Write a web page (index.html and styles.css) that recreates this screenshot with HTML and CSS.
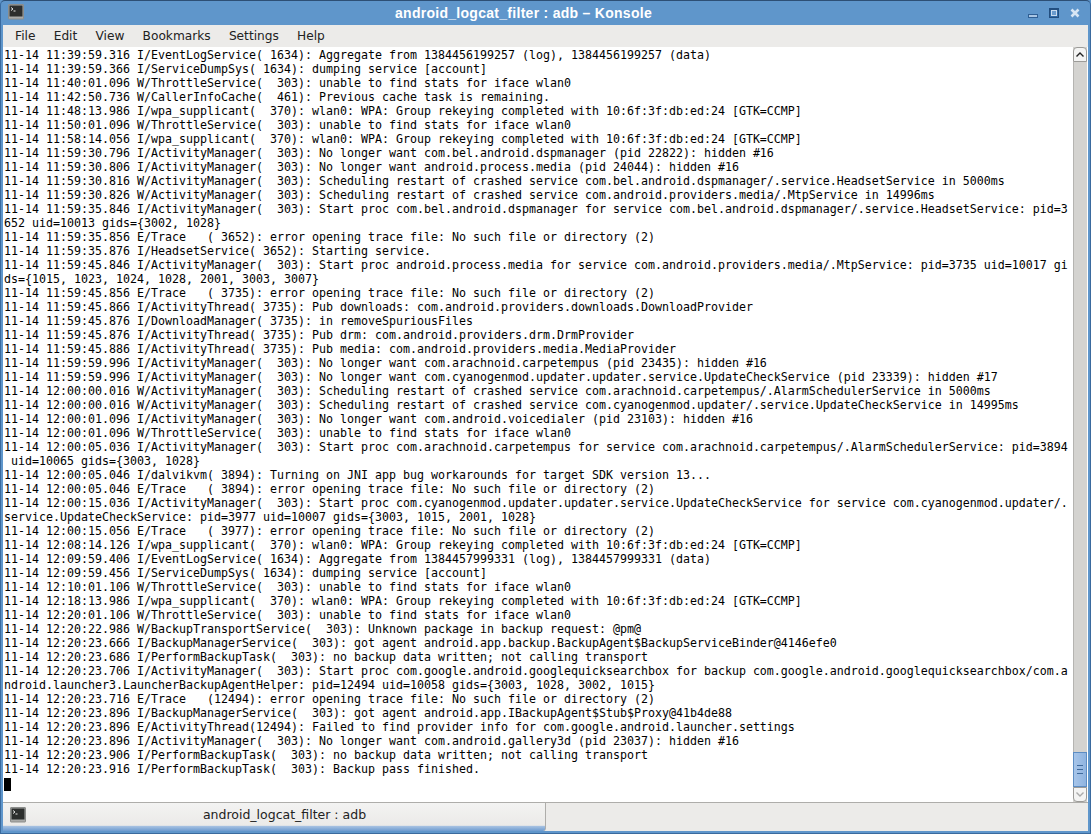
FILE: index.html
```html
<!DOCTYPE html>
<html lang="en">
<head>
<meta charset="utf-8">
<title>android_logcat_filter : adb – Konsole</title>
<link rel="stylesheet" href="styles.css">
</head>
<body>
<div class="window">
  <header class="titlebar">
    <svg class="app-icon" width="16" height="16" viewBox="0 0 16 16"><rect x="0.5" y="0.5" width="15" height="14.5" rx="0.5" fill="#a9aaa8" stroke="#8b8d8b"/><rect x="1.5" y="1.5" width="13" height="11" fill="#2c2e2d"/><path d="M3 3.5l2 1.5-2 1.5" fill="none" stroke="#e8e8e8"/><path d="M5.5 7h2" stroke="#e8e8e8"/></svg>
    <div class="title">android_logcat_filter : adb – Konsole</div>
    <div class="controls">
      <svg width="10" height="5" viewBox="0 0 10 5"><rect x="0.5" y="0.5" width="9" height="3" fill="#a9c6e4" stroke="#2f5f94"/></svg>
      <svg width="10" height="10" viewBox="0 0 10 10"><rect x="0.5" y="0.5" width="9" height="9" fill="#2f6aa8" stroke="#234f80"/><rect x="0.5" y="0.5" width="9" height="2" fill="#234f80"/><rect x="2.5" y="2.5" width="5" height="5" fill="#6a9bcd" stroke="#c9dcf0"/></svg>
      <svg width="10" height="10" viewBox="0 0 10 10"><path d="M1.5 1.5l7 7M8.5 1.5l-7 7" stroke="#d6e5f4" stroke-width="2.6"/></svg>
    </div>
  </header>
  <nav class="menubar">
    <span class="menu">File</span><span class="menu">Edit</span><span class="menu">View</span><span class="menu">Bookmarks</span><span class="menu">Settings</span><span class="menu">Help</span>
  </nav>
  <main class="terminal">
<pre class="log">11-14 11:39:59.316 I/EventLogService( 1634): Aggregate from 1384456199257 (log), 1384456199257 (data)
11-14 11:39:59.366 I/ServiceDumpSys( 1634): dumping service [account]
11-14 11:40:01.096 W/ThrottleService(  303): unable to find stats for iface wlan0
11-14 11:42:50.736 W/CallerInfoCache(  461): Previous cache task is remaining.
11-14 11:48:13.986 I/wpa_supplicant(  370): wlan0: WPA: Group rekeying completed with 10:6f:3f:db:ed:24 [GTK=CCMP]
11-14 11:50:01.096 W/ThrottleService(  303): unable to find stats for iface wlan0
11-14 11:58:14.056 I/wpa_supplicant(  370): wlan0: WPA: Group rekeying completed with 10:6f:3f:db:ed:24 [GTK=CCMP]
11-14 11:59:30.796 I/ActivityManager(  303): No longer want com.bel.android.dspmanager (pid 22822): hidden #16
11-14 11:59:30.806 I/ActivityManager(  303): No longer want android.process.media (pid 24044): hidden #16
11-14 11:59:30.816 W/ActivityManager(  303): Scheduling restart of crashed service com.bel.android.dspmanager/.service.HeadsetService in 5000ms
11-14 11:59:30.826 W/ActivityManager(  303): Scheduling restart of crashed service com.android.providers.media/.MtpService in 14996ms
11-14 11:59:35.846 I/ActivityManager(  303): Start proc com.bel.android.dspmanager for service com.bel.android.dspmanager/.service.HeadsetService: pid=3
652 uid=10013 gids={3002, 1028}
11-14 11:59:35.856 E/Trace   ( 3652): error opening trace file: No such file or directory (2)
11-14 11:59:35.876 I/HeadsetService( 3652): Starting service.
11-14 11:59:45.846 I/ActivityManager(  303): Start proc android.process.media for service com.android.providers.media/.MtpService: pid=3735 uid=10017 gi
ds={1015, 1023, 1024, 1028, 2001, 3003, 3007}
11-14 11:59:45.856 E/Trace   ( 3735): error opening trace file: No such file or directory (2)
11-14 11:59:45.866 I/ActivityThread( 3735): Pub downloads: com.android.providers.downloads.DownloadProvider
11-14 11:59:45.876 I/DownloadManager( 3735): in removeSpuriousFiles
11-14 11:59:45.876 I/ActivityThread( 3735): Pub drm: com.android.providers.drm.DrmProvider
11-14 11:59:45.886 I/ActivityThread( 3735): Pub media: com.android.providers.media.MediaProvider
11-14 11:59:59.996 I/ActivityManager(  303): No longer want com.arachnoid.carpetempus (pid 23435): hidden #16
11-14 11:59:59.996 I/ActivityManager(  303): No longer want com.cyanogenmod.updater.updater.service.UpdateCheckService (pid 23339): hidden #17
11-14 12:00:00.016 W/ActivityManager(  303): Scheduling restart of crashed service com.arachnoid.carpetempus/.AlarmSchedulerService in 5000ms
11-14 12:00:00.016 W/ActivityManager(  303): Scheduling restart of crashed service com.cyanogenmod.updater/.service.UpdateCheckService in 14995ms
11-14 12:00:01.096 I/ActivityManager(  303): No longer want com.android.voicedialer (pid 23103): hidden #16
11-14 12:00:01.096 W/ThrottleService(  303): unable to find stats for iface wlan0
11-14 12:00:05.036 I/ActivityManager(  303): Start proc com.arachnoid.carpetempus for service com.arachnoid.carpetempus/.AlarmSchedulerService: pid=3894
 uid=10065 gids={3003, 1028}
11-14 12:00:05.046 I/dalvikvm( 3894): Turning on JNI app bug workarounds for target SDK version 13...
11-14 12:00:05.046 E/Trace   ( 3894): error opening trace file: No such file or directory (2)
11-14 12:00:15.036 I/ActivityManager(  303): Start proc com.cyanogenmod.updater.updater.service.UpdateCheckService for service com.cyanogenmod.updater/.
service.UpdateCheckService: pid=3977 uid=10007 gids={3003, 1015, 2001, 1028}
11-14 12:00:15.056 E/Trace   ( 3977): error opening trace file: No such file or directory (2)
11-14 12:08:14.126 I/wpa_supplicant(  370): wlan0: WPA: Group rekeying completed with 10:6f:3f:db:ed:24 [GTK=CCMP]
11-14 12:09:59.406 I/EventLogService( 1634): Aggregate from 1384457999331 (log), 1384457999331 (data)
11-14 12:09:59.456 I/ServiceDumpSys( 1634): dumping service [account]
11-14 12:10:01.106 W/ThrottleService(  303): unable to find stats for iface wlan0
11-14 12:18:13.986 I/wpa_supplicant(  370): wlan0: WPA: Group rekeying completed with 10:6f:3f:db:ed:24 [GTK=CCMP]
11-14 12:20:01.106 W/ThrottleService(  303): unable to find stats for iface wlan0
11-14 12:20:22.986 W/BackupTransportService(  303): Unknown package in backup request: @pm@
11-14 12:20:23.666 I/BackupManagerService(  303): got agent android.app.backup.BackupAgent$BackupServiceBinder@4146efe0
11-14 12:20:23.686 I/PerformBackupTask(  303): no backup data written; not calling transport
11-14 12:20:23.706 I/ActivityManager(  303): Start proc com.google.android.googlequicksearchbox for backup com.google.android.googlequicksearchbox/com.a
ndroid.launcher3.LauncherBackupAgentHelper: pid=12494 uid=10058 gids={3003, 1028, 3002, 1015}
11-14 12:20:23.716 E/Trace   (12494): error opening trace file: No such file or directory (2)
11-14 12:20:23.896 I/BackupManagerService(  303): got agent android.app.IBackupAgent$Stub$Proxy@41b4de88
11-14 12:20:23.896 E/ActivityThread(12494): Failed to find provider info for com.google.android.launcher.settings
11-14 12:20:23.896 I/ActivityManager(  303): No longer want com.android.gallery3d (pid 23037): hidden #16
11-14 12:20:23.906 I/PerformBackupTask(  303): no backup data written; not calling transport
11-14 12:20:23.916 I/PerformBackupTask(  303): Backup pass finished.
<span class="cursor"> </span></pre>
    <div class="scrollbar">
      <div class="sb-btn sb-up"><svg width="8" height="5" viewBox="0 0 8 5"><path d="M0.5 4.5L4 1l3.5 3.5" fill="none" stroke="#222" stroke-width="1.4"/></svg></div>
      <div class="sb-track"></div>
      <div class="sb-thumb"><span></span><span></span><span></span></div>
      <div class="sb-btn sb-down"><svg width="8" height="5" viewBox="0 0 8 5"><path d="M0.5 0.5L4 4l3.5-3.5" fill="none" stroke="#aaa" stroke-width="1.4"/></svg></div>
    </div>
  </main>
  <footer class="tabbar">
    <div class="tab">
      <svg class="tab-icon" width="16" height="16" viewBox="0 0 16 16"><rect x="0.5" y="0.5" width="15" height="14.5" rx="0.5" fill="#a9aaa8" stroke="#8b8d8b"/><rect x="1.5" y="1.5" width="13" height="11" fill="#2c2e2d"/><path d="M3 3.5l2 1.5-2 1.5" fill="none" stroke="#e8e8e8"/><path d="M5.5 7h2" stroke="#e8e8e8"/></svg>
      <span class="tab-label">android_logcat_filter : adb</span>
    </div>
  </footer>
</div>
</body>
</html>
```

FILE: styles.css
```css
html, body { margin: 0; padding: 0; }
body { width: 1091px; height: 834px; overflow: hidden; background: #5f96cb; }
.window {
  width: 1091px; height: 834px; box-sizing: border-box;
  display: flex; flex-direction: column;
  background: #5f96cb;
  border-top: 1px solid #2d4f75;
  border-left: 1px solid #3a6a9e;
  border-right: 1px solid #3a6a9e;
  border-bottom: 1px solid #3a6a9e;
  border-radius: 5px 5px 0 0;
}
.titlebar {
  height: 24px; flex: none; display: flex; align-items: center;
  padding: 0 7px; position: relative;
}
.app-icon { margin-top: -2px; }
.title {
  flex: 1; text-align: center; font: bold 14px/24px "Liberation Sans", sans-serif;
  letter-spacing: 0.28px;
  color: #fff; padding-right: 5px;
}
.controls { display: flex; align-items: center; gap: 11px; padding-right: 3px; }
.controls svg:first-child { margin-top: 6px; }
.menubar {
  height: 22px; flex: none; margin: 0 2px; background: #ecebe9;
  display: flex; align-items: center; padding-left: 3px;
  font: 12.2px/22px "DejaVu Sans", sans-serif; color: #222;
}
.menu { padding: 0 9.1px; }
.terminal {
  height: 755px; flex: none; margin: 0 2px; background: #fff;
  display: flex; overflow: hidden;
}
.log {
  flex: 1; margin: 0; padding: 1px 0 0 1px;
  font: 11.63px/14px "DejaVu Sans Mono", monospace; color: #000;
  white-space: pre; overflow: hidden;
}
.cursor { display: inline-block; width: 7px; height: 13px; background: #000; vertical-align: -2px; }
.scrollbar {
  width: 14px; flex: none; display: flex; flex-direction: column;
  background: #d4d3d0; margin-right: 1px;
}
.sb-btn {
  height: 15px; flex: none; box-sizing: border-box; background: #f4f4f3;
  border: 1px solid #9c9b98; display: flex; align-items: center; justify-content: center;
}
.sb-up { border-radius: 4px 4px 0 0; }
.sb-down { border-radius: 0 0 4px 4px; }
.sb-track { flex: 1; border-left: 1px solid #b5b4b1; }
.sb-thumb {
  height: 35px; flex: none; box-sizing: border-box;
  background: linear-gradient(90deg, #a7c5e9, #8fb4e0);
  border: 1px solid #5d8dc3; display: flex; flex-direction: column;
  align-items: center; justify-content: center; gap: 3px;
}
.sb-thumb span { width: 6px; height: 1px; background: #3f6a9c; display: block; }
.tabbar {
  height: 29px; flex: none; margin: 0 2px; background: #ecebe9;
  border-top: 1px solid #aeadaa; box-sizing: border-box;
}
.tab {
  width: 543px; height: 28px; box-sizing: border-box;
  background: linear-gradient(180deg, #f3f3f2 0%, #ebeae8 80%, #a9c3e2 82%, #6d9bd0 100%);
  border-right: 1px solid #aeadaa; border-bottom-right-radius: 3px;
  display: flex; align-items: center; padding: 0 0 5px 7px;
}
.tab-label {
  flex: 1; text-align: center; font: 12.5px/20px "DejaVu Sans", sans-serif; color: #222;
  padding-right: 2px;
}
```
